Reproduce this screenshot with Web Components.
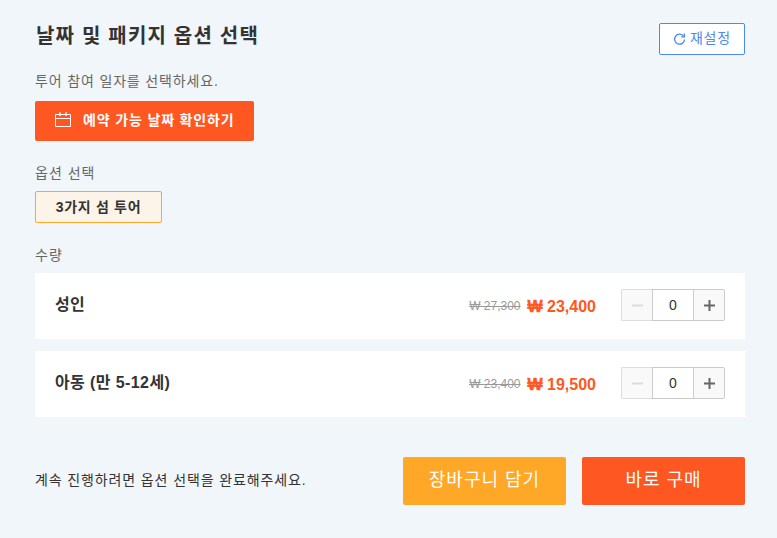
<!DOCTYPE html>
<html lang="ko">
<head>
<meta charset="utf-8">
<title>날짜 및 패키지 옵션 선택</title>
<style>
  html, body { margin: 0; background: #f1f6fa; }
  body { font-family: "Liberation Sans", "Noto Sans CJK KR", sans-serif; color: #333; }
</style>
</head>
<body>
<tour-options>
  <qty-row label="성인" old="₩ 27,300" price="23,400"></qty-row>
  <qty-row label="아동 (만 5-12세)" old="₩ 23,400" price="19,500"></qty-row>
</tour-options>

<script>
const FONT = '"Liberation Sans", "Noto Sans CJK KR", sans-serif';

class QtyStepper extends HTMLElement {
  constructor() {
    super();
    this.attachShadow({ mode: 'open' }).innerHTML = `<style>
      :host { display: flex; width: 104px; height: 32px; box-sizing: border-box; margin-top: -2px; }
      div { box-sizing: border-box; border: 1px solid #ccc; display: flex; align-items: center; justify-content: center; height: 32px; }
      .minus, .plus { background: #f9f9f9; }
      .minus { width: 31px; border-radius: 2px 0 0 2px; border-right: 0; border-color: #ddd; }
      .plus { width: 31px; border-radius: 0 2px 2px 0; border-left: 0; }
      .num { flex: 1; background: #fff; font-size: 14px; line-height: 1; color: #333; }
      svg { display: block; }
    </style>
    <div class="minus"><svg width="11" height="11" viewBox="0 0 11 11"><path d="M0 5.5h11" stroke="#ddd" stroke-width="2"/></svg></div>
    <div class="num">0</div>
    <div class="plus"><svg width="11" height="11" viewBox="0 0 11 11"><path d="M0 5.5h11M5.5 0v11" stroke="#666" stroke-width="2"/></svg></div>`;
  }
}
customElements.define('qty-stepper', QtyStepper);

class QtyRow extends HTMLElement {
  constructor() {
    super();
    this.attachShadow({ mode: 'open' }).innerHTML = `<style>
      :host { display: flex; align-items: center; height: 66px; padding: 0 20px; background: #fff; box-sizing: border-box; }
      .label { flex: 1; font-size: 16px; line-height: 20px; font-weight: 700; color: #333; letter-spacing: .4px; margin-top: -3px; }
      .old { font-size: 12px; line-height: 16px; color: #999; text-decoration: line-through; margin-right: 7px; }
      .price { font-size: 16px; line-height: 20px; font-weight: 700; color: #ff5722; margin-right: 25px; margin-top: 1px; white-space: nowrap; }
      .won { -webkit-text-stroke: .4px #ff5722; }
    </style>
    <span class="label"></span><span class="old"></span><span class="price"><span class="won">₩</span> <span class="amount"></span></span><qty-stepper></qty-stepper>`;
  }
  connectedCallback() {
    const r = this.shadowRoot;
    r.querySelector('.label').textContent = this.getAttribute('label');
    r.querySelector('.old').textContent = this.getAttribute('old');
    r.querySelector('.amount').textContent = this.getAttribute('price');
  }
}
customElements.define('qty-row', QtyRow);

class TourOptions extends HTMLElement {
  constructor() {
    super();
    this.attachShadow({ mode: 'open' }).innerHTML = `<style>
      :host { display: block; box-sizing: border-box; width: 777px; height: 538px; padding: 23px 32px 0 35px; font-family: ${FONT}; overflow: hidden; }
      .head { display: flex; justify-content: space-between; align-items: flex-start; height: 32px; }
      h2 { margin: 1px 0 0 1px; font-size: 20px; line-height: 24px; font-weight: 700; color: #333; letter-spacing: 1.2px; }
      .reset { box-sizing: border-box; width: 86px; height: 32px; display: flex; align-items: center; justify-content: center; gap: 4px; background: #fff; border: 1px solid #4a8af4; border-radius: 2px; color: #4a8af4; font-size: 14px; line-height: 20px; letter-spacing: .85px; padding-bottom: 3px; }
      .reset svg { margin-top: 3px; }
      .hint { margin-top: 16px; font-size: 14px; line-height: 20px; color: #666; letter-spacing: .85px; }
      .date { box-sizing: border-box; margin-top: 10px; width: 219px; height: 40px; display: flex; align-items: center; padding-left: 20px; padding-bottom: 2px; gap: 12px; background: #ff5722; border-radius: 2px; color: #fff; font-size: 14px; line-height: 20px; font-weight: 700; letter-spacing: .85px; }
      .label { font-size: 14px; line-height: 20px; color: #666; letter-spacing: 1px; }
      .opt-label { margin-top: 22px; }
      .chip { box-sizing: border-box; margin-top: 8px; width: 127px; height: 32px; display: flex; align-items: center; justify-content: center; background: #fdf4e9; border: 1px solid #ffa726; border-radius: 2px; font-size: 14px; line-height: 20px; font-weight: 700; color: #333; letter-spacing: .7px; }
      .qty-label { margin-top: 22px; }
      .rows { margin-top: 8px; display: flex; flex-direction: column; gap: 12px; }
      .foot { margin-top: 40px; display: flex; align-items: center; gap: 16px; }
      .msg { flex: 1; font-size: 14px; line-height: 20px; color: #333; letter-spacing: .88px; margin-top: -2px; }
      .cta { box-sizing: border-box; width: 163px; height: 48px; display: flex; align-items: center; justify-content: center; padding-bottom: 2px; border-radius: 2px; color: #fff; font-size: 18px; line-height: 24px; letter-spacing: 1px; }
      .cart { background: #ffa726; }
      .buy { background: #ff5722; }
      svg { display: block; }
    </style>
    <div class="head">
      <h2>날짜 및 패키지 옵션 선택</h2>
      <div class="reset"><svg width="13" height="13" viewBox="0 0 13 13" fill="none" stroke="#4a8af4" stroke-width="1.3"><path d="M10.8 3.4A5 5 0 1 0 11.6 6.5"/><path d="M11.4 .6v3.2H8.2"/></svg>재설정</div>
    </div>
    <div class="hint">투어 참여 일자를 선택하세요.</div>
    <div class="date"><svg width="16" height="16" viewBox="0 0 16 16" fill="none" stroke="#fff" stroke-width="1"><path d="M.5 2.5h15v12h-15zM.5 6.5h15"/><path d="M5 0v4M11 0v4" stroke-width="1.2"/></svg>예약 가능 날짜 확인하기</div>
    <div class="label opt-label">옵션 선택</div>
    <div class="chip">3가지 섬 투어</div>
    <div class="label qty-label">수량</div>
    <div class="rows"><slot></slot></div>
    <div class="foot">
      <div class="msg">계속 진행하려면 옵션 선택을 완료해주세요.</div>
      <div class="cta cart">장바구니 담기</div>
      <div class="cta buy">바로 구매</div>
    </div>`;
  }
}
customElements.define('tour-options', TourOptions);
</script>
</body>
</html>
